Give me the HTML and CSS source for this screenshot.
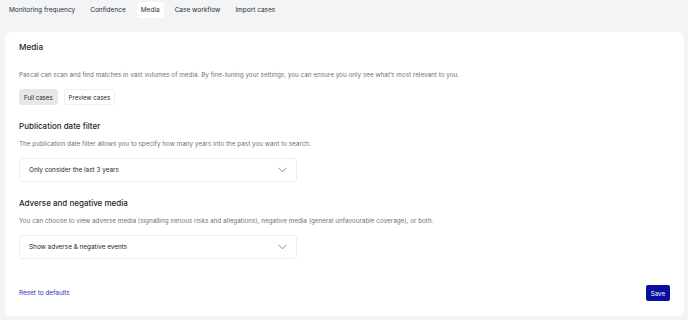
FILE: index.html
```html
<!DOCTYPE html>
<html>
<head>
  <title>Settings - Media</title>
  <link rel="stylesheet" href="styles.css">
</head>
<body>
  <div class="page">
    <nav class="tabs">
      <a href="#" class="tab">Monitoring frequency</a>
      <a href="#" class="tab">Confidence</a>
      <a href="#" class="tab active">Media</a>
      <a href="#" class="tab">Case workflow</a>
      <a href="#" class="tab">Import cases</a>
    </nav>

    <div class="card">
      <h2 class="title">Media</h2>
      <p class="desc first">Pascal can scan and find matches in vast volumes of media. By fine-tuning your settings, you can ensure you only see what’s most relevant to you.</p>
      <div class="toggle">
        <button class="toggle-btn selected">Full cases</button>
        <button class="toggle-btn">Preview cases</button>
      </div>

      <h3 class="section-title">Publication date filter</h3>
      <p class="desc">The publication date filter allows you to specify how many years into the past you want to search.</p>
      <div class="select">
        <span>Only consider the last 3 years</span>
        <svg class="chevron" width="9" height="6" viewBox="0 0 9 6"><path d="M0.5 0.8 L4.5 4.8 L8.5 0.8" fill="none" stroke="#7a7d85" stroke-width="0.9"/></svg>
      </div>

      <h3 class="section-title">Adverse and negative media</h3>
      <p class="desc">You can choose to view adverse media (signalling serious risks and allegations), negative media (general unfavourable coverage), or both.</p>
      <div class="select">
        <span>Show adverse &amp; negative events</span>
        <svg class="chevron" width="9" height="6" viewBox="0 0 9 6"><path d="M0.5 0.8 L4.5 4.8 L8.5 0.8" fill="none" stroke="#7a7d85" stroke-width="0.9"/></svg>
      </div>

      <div class="footer">
        <a href="#" class="reset">Reset to defaults</a>
        <button class="save">Save</button>
      </div>
    </div>
  </div>
</body>
</html>
```

FILE: styles.css
```css
body {
  margin: 0;
  background-color: #f3f4f6;
  font-family: Inter, "Noto Sans", sans-serif;
  color: #1d1f24;
}

.page {
  padding: 2px 4px 4px 5px;
}

.tabs {
  display: flex;
  gap: 7px;
  height: 16px;
  align-items: center;
}

.tab {
  padding: 0 4px;
  height: 16px;
  line-height: 16px;
  font-size: 6.5px;
  color: #2a2c33;
  text-decoration: none;
  border-radius: 3px;
}

.tab.active {
  background-color: #ffffff;
}

.card {
  margin-top: 14px;
  background-color: #ffffff;
  border-radius: 6px;
  padding: 10px 14px 15px 14px;
  height: 259px;
  display: flex;
  flex-direction: column;
  box-sizing: content-box;
}

.title {
  margin: 0;
  font-size: 8.2px;
  font-weight: 500;
  line-height: 10px;
}

.desc {
  margin: 9px 0 0 0;
  font-size: 6.35px;
  line-height: 8px;
  color: #6f727a;
}

.desc.first {
  margin-top: 19px;
}

.toggle {
  display: flex;
  gap: 6px;
  margin-top: 10px;
}

.toggle-btn {
  height: 16px;
  padding: 0 4px;
  font-family: inherit;
  font-size: 6.1px;
  color: #1d1f24;
  background-color: #ffffff;
  border: 1px solid #eceef1;
  border-radius: 3px;
}

.toggle-btn.selected {
  background-color: #e6e7ea;
  border-color: #e6e7ea;
}

.section-title {
  margin: 16px 0 0 0;
  font-size: 8px;
  font-weight: 500;
  line-height: 10px;
}

.select {
  margin-top: 10px;
  width: 278px;
  height: 24px;
  box-sizing: border-box;
  border: 1px solid #eceef1;
  border-radius: 3px;
  display: flex;
  align-items: center;
  justify-content: space-between;
  padding: 0 9px 0 9px;
  font-size: 6.4px;
}

.footer {
  margin-top: auto;
  display: flex;
  justify-content: space-between;
  align-items: center;
}

.reset {
  font-size: 6.4px;
  color: #2b35b8;
  text-decoration: none;
}

.save {
  height: 16px;
  padding: 0 5px;
  font-family: inherit;
  font-size: 6.2px;
  color: #ffffff;
  background-color: #0b0fa0;
  border: none;
  border-radius: 2px;
}
```
